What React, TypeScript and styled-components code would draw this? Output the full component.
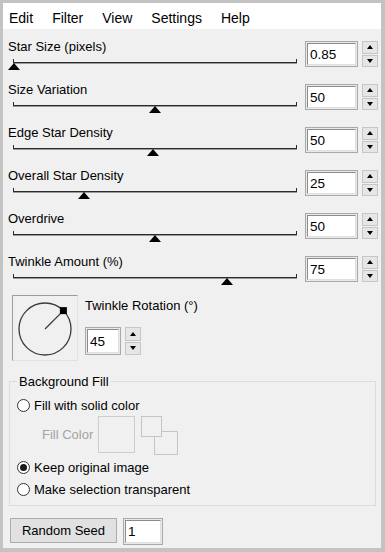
import React from "react";
import styled, { createGlobalStyle } from "styled-components";

const GlobalStyle = createGlobalStyle`
  html, body {
    margin: 0;
    padding: 0;
    background: #c3c3c3;
  }
  * {
    box-sizing: border-box;
  }
`;

const StyledWindow = styled.div`
  width: 385px;
  height: 552px;
  border-style: solid;
  border-color: #c3c3c3;
  border-width: 3px 4px 4px 3px;
  background: #f0f0f0;
  font-family: "Segoe UI", "Liberation Sans", Arial, sans-serif;
  font-size: 13px;
  color: #000;
  display: flex;
  flex-direction: column;
`;

const StyledMenuBar = styled.div`
  display: flex;
  align-items: center;
  gap: 19px;
  height: 26px;
  padding: 3px 0 0 6px;
  background: #fff;
  font-size: 14px;
`;

const StyledMenuItem = styled.span`
  line-height: 18px;
  cursor: default;
`;

const StyledContent = styled.div`
  padding: 8px 3px 0 5px;
  display: flex;
  flex-direction: column;
`;

const StyledRow = styled.div`
  display: flex;
  height: 43px;
`;

const StyledSliderCol = styled.div`
  flex: 1;
  margin-right: 7px;
  display: flex;
  flex-direction: column;
`;

const StyledLabel = styled.div`
  margin-top: 2px;
  line-height: 16px;
  white-space: nowrap;
`;

const StyledTrack = styled.div`
  position: relative;
  height: 12px;
  margin: 0 1px 0 5px;
  &::before {
    content: "";
    position: absolute;
    left: 0;
    right: 0;
    top: 7px;
    height: 1px;
    background: #2b2b2b;
    box-shadow: 0 1px 0 #9a9a9a;
  }
  &::after {
    content: "";
    position: absolute;
    left: 0;
    right: 0;
    top: 4px;
    height: 4px;
    border-left: 1px solid #2b2b2b;
    border-right: 1px solid #2b2b2b;
  }
`;

const StyledThumb = styled.div`
  position: absolute;
  top: 8px;
  width: 0;
  height: 0;
  border-left: 6.5px solid transparent;
  border-right: 6.5px solid transparent;
  border-bottom: 7px solid #000;
`;

const StyledSpinGroup = styled.div<{ $top?: number }>`
  display: flex;
  gap: 4px;
  margin-top: ${(p) => p.$top ?? 4}px;
  align-self: flex-start;
`;

const StyledField = styled.div<{ $w: number; $h: number }>`
  width: ${(p) => p.$w}px;
  height: ${(p) => p.$h}px;
  border: 1px solid #a9a9a9;
  padding: 1px;
  background: #e9e9e9;
  display: flex;
`;

const StyledFieldInner = styled.div`
  flex: 1;
  background: #fff;
  border-top: 1px solid #8c8c8c;
  border-left: 1px solid #8c8c8c;
  border-right: 1px solid #e0e0e0;
  border-bottom: 1px solid #e0e0e0;
  padding-left: 2px;
  display: flex;
  align-items: center;
  font-size: 13.5px;
  font-family: "Liberation Sans", Arial, sans-serif;
`;

const StyledSpin = styled.div<{ $h: number }>`
  width: 16px;
  height: ${(p) => p.$h}px;
  display: flex;
  flex-direction: column;
  gap: 1px;
`;

const StyledSpinButton = styled.div<{ $down?: boolean }>`
  flex: 1;
  background: #e6e6e6;
  border: 1px solid #c6c6c6;
  display: flex;
  align-items: center;
  justify-content: center;
  &::after {
    content: "";
    width: 0;
    height: 0;
    border-left: 3.5px solid transparent;
    border-right: 3.5px solid transparent;
    ${(p) =>
      p.$down
        ? "border-top: 4px solid #000;"
        : "border-bottom: 4px solid #000;"}
  }
`;

const StyledRotation = styled.div`
  display: flex;
  gap: 7px;
  padding-left: 4px;
`;

const StyledDial = styled.div`
  width: 66px;
  height: 66px;
  border-top: 1px solid #9c9c9c;
  border-left: 1px solid #9c9c9c;
  border-right: 1px solid #e2e2e2;
  border-bottom: 1px solid #e2e2e2;
`;

const StyledRotationSide = styled.div`
  display: flex;
  flex-direction: column;
`;

const StyledRotationLabel = styled(StyledLabel)`
  margin-top: 3px;
  margin-bottom: 13px;
`;

const StyledFieldset = styled.fieldset`
  margin: 13px 2px 0 1px;
  padding: 5px 4px 5px 7px;
  border: 1px solid #dcdcdc;
  min-width: 0;
`;

const StyledLegend = styled.legend`
  padding: 0 2px;
  line-height: 15px;
`;

const StyledRadioRow = styled.label`
  display: flex;
  align-items: center;
  gap: 4px;
  height: 22px;
`;

const StyledRadio = styled.span<{ $checked?: boolean }>`
  width: 13px;
  height: 13px;
  border-radius: 50%;
  border: 1px solid #333;
  background: #fff;
  display: flex;
  align-items: center;
  justify-content: center;
  &::after {
    content: "";
    width: 7px;
    height: 7px;
    border-radius: 50%;
    background: ${(p) => (p.$checked ? "#1a1a1a" : "transparent")};
  }
`;

const StyledFillRow = styled.div`
  display: flex;
  align-items: center;
  height: 40px;
  padding: 0 0 3px 25px;
`;

const StyledDisabledLabel = styled.span`
  color: #a3a3a3;
  width: 56px;
`;

const StyledColorBox = styled.div`
  width: 37px;
  height: 37px;
  border: 1px solid #cdcdcd;
  margin-right: 6px;
`;

const StyledBottom = styled.div`
  display: flex;
  gap: 6px;
  margin-top: 12px;
  padding-left: 2px;
`;

const StyledButton = styled.button`
  width: 107px;
  height: 25px;
  background: #e1e1e1;
  border: 1px solid #adadad;
  font-family: "Segoe UI", "Liberation Sans", Arial, sans-serif;
  font-size: 13px;
  color: #000;
  padding: 0;
`;

type SliderRow = { label: string; value: string; pos: number };

const rows: SliderRow[] = [
  { label: "Star Size (pixels)", value: "0.85", pos: 0 },
  { label: "Size Variation", value: "50", pos: 50 },
  { label: "Edge Star Density", value: "50", pos: 49.4 },
  { label: "Overall Star Density", value: "25", pos: 25 },
  { label: "Overdrive", value: "50", pos: 50 },
  { label: "Twinkle Amount (%)", value: "75", pos: 75.5 },
];

function Spinner({ h }: { h: number }) {
  return (
    <StyledSpin $h={h}>
      <StyledSpinButton />
      <StyledSpinButton $down />
    </StyledSpin>
  );
}

function NumberField({ value, w, h, top }: { value: string; w: number; h: number; top?: number }) {
  return (
    <StyledSpinGroup $top={top}>
      <StyledField $w={w} $h={h}>
        <StyledFieldInner>{value}</StyledFieldInner>
      </StyledField>
      <Spinner h={h} />
    </StyledSpinGroup>
  );
}

function Dial() {
  const cx = 32;
  const cy = 33;
  const r = 26;
  const a = (45 * Math.PI) / 180;
  const ex = cx + r * Math.cos(a);
  const ey = cy - r * Math.sin(a);
  return (
    <StyledDial>
      <svg width="64" height="64" viewBox="0 0 64 64">
        <circle cx={cx} cy={cy} r={r} fill="none" stroke="#3a3a3a" strokeWidth="1.3" />
        <line x1={cx} y1={cy} x2={ex} y2={ey} stroke="#3a3a3a" strokeWidth="1.3" />
        <rect x={ex - 3.5} y={ey - 3.5} width="7" height="7" fill="#000" />
      </svg>
    </StyledDial>
  );
}

function SwapColors() {
  return (
    <svg width="38" height="40" viewBox="0 0 38 40">
      <rect x="0.5" y="1.5" width="20" height="20" fill="none" stroke="#c4c4c4" />
      <path d="M20.5 16.5 H36.5 V39.5 H13.5 V21.5" fill="none" stroke="#c4c4c4" />
    </svg>
  );
}

export default function App() {
  return (
    <>
      <GlobalStyle />
      <StyledWindow>
        <StyledMenuBar>
          <StyledMenuItem>Edit</StyledMenuItem>
          <StyledMenuItem>Filter</StyledMenuItem>
          <StyledMenuItem>View</StyledMenuItem>
          <StyledMenuItem>Settings</StyledMenuItem>
          <StyledMenuItem>Help</StyledMenuItem>
        </StyledMenuBar>
        <StyledContent>
          {rows.map((row) => (
            <StyledRow key={row.label}>
              <StyledSliderCol>
                <StyledLabel>{row.label}</StyledLabel>
                <StyledTrack>
                  <StyledThumb style={{ left: 1 + row.pos * 2.83 - 6.5 }} />
                </StyledTrack>
              </StyledSliderCol>
              <NumberField value={row.value} w={53} h={26} />
            </StyledRow>
          ))}
          <StyledRotation>
            <Dial />
            <StyledRotationSide>
              <StyledRotationLabel>Twinkle Rotation (°)</StyledRotationLabel>
              <NumberField value="45" w={36} h={28} top={0} />
            </StyledRotationSide>
          </StyledRotation>
          <StyledFieldset>
            <StyledLegend>Background Fill</StyledLegend>
            <StyledRadioRow>
              <StyledRadio />
              Fill with solid color
            </StyledRadioRow>
            <StyledFillRow>
              <StyledDisabledLabel>Fill Color</StyledDisabledLabel>
              <StyledColorBox />
              <SwapColors />
            </StyledFillRow>
            <StyledRadioRow>
              <StyledRadio $checked />
              Keep original image
            </StyledRadioRow>
            <StyledRadioRow>
              <StyledRadio />
              Make selection transparent
            </StyledRadioRow>
          </StyledFieldset>
          <StyledBottom>
            <StyledButton>Random Seed</StyledButton>
            <StyledField $w={40} $h={27}>
              <StyledFieldInner>1</StyledFieldInner>
            </StyledField>
          </StyledBottom>
        </StyledContent>
      </StyledWindow>
    </>
  );
}
